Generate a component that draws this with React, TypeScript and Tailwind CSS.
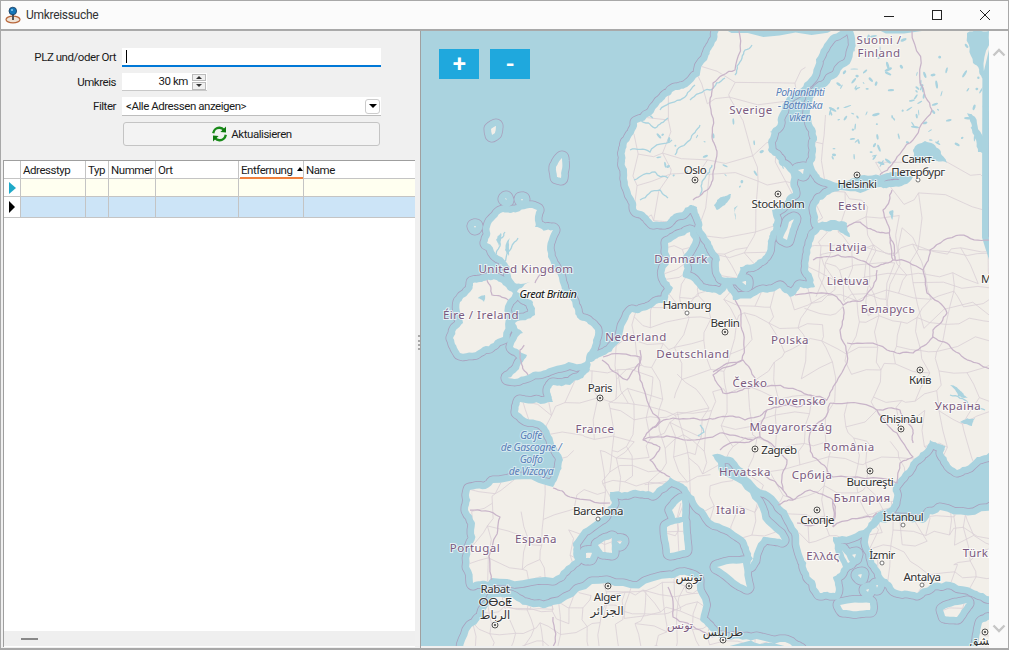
import React from "react";

function rng(seed: number) {
  let s = seed;
  return () => {
    s = (s * 16807) % 2147483647;
    return (s - 1) / 2147483646;
  };
}

function parse(p: string): [number, number][] {
  return p.split(" ").map((q) => {
    const [x, y] = q.split(",").map(Number);
    return [x, y] as [number, number];
  });
}

function rough(p: string, seed: number, closed: boolean, amp = 0.13, levels = 3): string {
  const r = rng(seed * 97 + 13);
  let pts = parse(p);
  if (closed) pts = [...pts, pts[0]];
  for (let l = 0; l < levels; l++) {
    const out: [number, number][] = [pts[0]];
    for (let i = 1; i < pts.length; i++) {
      const [ax, ay] = pts[i - 1];
      const [bx, by] = pts[i];
      const dx = bx - ax;
      const dy = by - ay;
      const k = (r() - 0.5) * amp * 2;
      out.push([(ax + bx) / 2 - dy * k, (ay + by) / 2 + dx * k], [bx, by]);
    }
    pts = out;
  }
  return pts.map(([x, y]) => `${x.toFixed(1)},${y.toFixed(1)}`).join(" ");
}

const LAND_RAW: string[] = [
  "717,25 712,48 707,60 687,87 672,92 660,103 637,123 627,143 625,160 627,172 633,197 637,210 653,222 664,222 672,216 690,205 697,207 700,217 707,237 713,247 720,260 722,277 737,278 740,267 755,263 762,258 768,243 773,230 772,210 782,205 793,193 791,175 780,165 768,150 772,130 780,113 795,92 813,73 823,47 842,30 842,25",
  "850,25 853,53 837,77 817,93 810,117 817,140 813,163 820,177 837,183 857,178 887,173 900,172 913,177 893,187 880,187 840,190 820,200 818,223 835,220 847,223 850,237 837,230 820,230 812,243 808,270 815,287 800,287 790,297 780,288 763,292 737,300 733,300 727,288 720,295 707,292 700,290 683,277 682,260 693,240 690,232 668,243 665,277 673,288 672,290 667,302 647,310 632,312 620,342 600,357 590,362 590,370 583,378 570,385 553,385 550,392 553,402 520,402 518,412 543,423 553,440 563,460 558,477 553,487 493,483 470,490 468,510 475,523 470,550 473,583 488,582 492,578 553,578 575,560 573,543 597,520 612,503 610,492 633,490 653,493 670,477 687,487 700,507 727,527 747,543 753,560 750,565 763,537 782,540 757,503 720,473 712,455 733,458 747,477 777,500 793,523 803,557 807,570 820,593 835,593 833,577 843,567 833,537 867,527 877,513 893,503 893,487 907,470 917,457 930,440 945,446 943,453 957,470 977,457 995,450 995,25",
  "995,507 940,510 923,523 880,522 870,533 873,557 883,577 897,590 917,593 933,583 967,587 983,593 995,597",
  "517,212 537,210 535,227 553,230 548,257 557,273 573,307 580,320 595,330 590,350 585,362 553,367 533,372 508,378 515,373 527,355 513,347 523,333 515,323 535,315 533,302 517,292 530,282 515,283 510,267 507,263 487,243 490,227 503,212",
  "487,280 500,282 513,293 507,302 503,337 483,347 460,353 453,338 463,323 460,302 470,292 473,283",
  "463,650 483,617 495,597 510,597 537,607 553,605 607,583 670,578 680,575 697,580 700,620 713,637 720,638 750,640 790,644 800,650",
  "982,623 995,620 995,650 978,650",
  "717,567 743,563 747,587 735,580",
  "667,527 683,522 685,550 670,553",
  "672,510 682,500 682,517 675,518",
  "840,605 870,603 870,610 843,610",
  "943,610 967,603 957,617 945,616",
  "598,545 612,538 612,553 603,552",
  "586,553 592,553 590,558 586,558",
  "617,541 622,541 620,544",
  "789,222 794,219 787,240 783,238",
  "822,202 835,203 832,211 822,210",
  "742,282 746,281 746,285",
  "556,167 562,158 561,178 557,177",
  "505,199 506,198 507,200",
  "521,199 523,199 522,201",
  "474,226 476,226 475,228",
  "491,129 496,126 495,133 492,135",
  "798,170 804,169 803,174",
  "858,575 862,574 861,578",
  "866,590 869,589 868,592",
  "876,585 878,585 877,588",
  "842,550 850,562 848,563",
  "852,555 856,554 855,558",
];
const LAND = LAND_RAW.map((p, i) => rough(p, i + 1, true, i < 7 ? 0.13 : 0.05));

const LAKES_RAW: string[] = [
  "913,150 925,141 940,150 947,163 930,160 915,162",
  "967,113 975,117 985,140 988,152 978,152 972,130",
  "714,205 722,197 731,194 725,205 717,210",
  "735,220 738,205 734,208",
  "889,212 893,210 892,220",
  "967,33 989,31 989,83 982,78 973,63",
  "505,250 510,238 509,256",
  "496,240 501,233 499,246",
  "478,298 485,295 484,302",
  "950,385 962,392 968,398 958,396",
  "960,422 975,418 972,426",
];
const LAKES = LAKES_RAW.map((p, i) => rough(p, i + 40, true, 0.12));

const FJORDS: string[] = [
  "640,120 655,128 668,118",
  "630,150 650,152 672,140",
  "634,180 655,172 668,178",
  "640,200 660,190 668,198",
  "675,155 690,140 700,125",
  "690,100 710,90 725,78",
  "735,75 742,58 752,45",
  "700,195 705,178 712,165",
  "660,110 680,100 695,85",
  "505,262 510,250 518,238",
  "495,258 500,246 505,232",
  "950,395 968,404 985,410",
  "700,425 704,432 698,436",
];

const BORDERS_RAW: string[] = [
  "739,31 735,70 713,83 710,100 712,137 717,153 713,177 707,190 693,200",
  "912,31 920,83 932,110 913,140 893,163 880,175",
  "892,190 883,210 890,237",
  "813,260 823,257 853,257 873,267 893,260 890,237",
  "847,227 860,222 877,232 890,233",
  "877,270 873,287 863,300 843,305 837,297 795,295",
  "893,260 923,270 927,293 947,313 933,330 933,337",
  "843,307 840,330 847,363 833,387 827,400",
  "847,343 887,350 913,353 933,337 953,350 977,363 995,372",
  "713,372 743,360 763,387 797,390 827,400",
  "767,410 797,407 827,400",
  "735,300 742,330 742,360 713,375 723,393 745,388 763,387",
  "603,357 640,357 643,387 660,420",
  "640,350 640,363 627,380 602,360",
  "650,430 673,418 700,420 720,417 745,420 767,410 760,437",
  "643,440 660,437 687,440 720,433 740,437 753,440",
  "660,447 650,460 670,477",
  "660,420 650,430 643,440 660,447",
  "553,488 570,497 610,503",
  "470,510 500,517 493,543 490,570 492,580",
  "720,450 753,440 760,437 787,460 783,490 793,500 810,490 833,500 833,520 797,523",
  "830,403 877,410 897,433 913,457 900,463 897,483 833,477 813,457 810,433 830,403",
  "877,410 900,410 913,430 913,443",
  "833,527 873,517 877,513",
  "833,500 833,527",
  "765,476 783,490",
  "778,505 793,500",
  "535,283 548,268 557,273",
  "487,280 492,295 508,300",
  "524,345 520,350 522,365 528,375",
  "553,617 553,650",
  "668,587 673,617 700,630 713,637",
  "890,237 895,260",
  "989,240 960,235 930,250 923,270",
];
const BORDERS = BORDERS_RAW.map((p, i) => rough(p, i + 70, false, 0.1));

function net(x0: number, y0: number, x1: number, y1: number, c: number, seed: number) {
  const r = rng(seed);
  const cols = Math.ceil((x1 - x0) / c);
  const rows = Math.ceil((y1 - y0) / c);
  const p: [number, number][][] = [];
  for (let j = 0; j <= rows; j++) {
    const row: [number, number][] = [];
    for (let i = 0; i <= cols; i++) {
      row.push([x0 + i * c + (r() - 0.5) * c * 0.8, y0 + j * c + (r() - 0.5) * c * 0.8]);
    }
    p.push(row);
  }
  const seg = (a: [number, number], b: [number, number]) => {
    const s = (a[0] + b[0]) / 2 + (r() - 0.5) * c * 0.35;
    const t = (a[1] + b[1]) / 2 + (r() - 0.5) * c * 0.35;
    return `M${a[0].toFixed(1)} ${a[1].toFixed(1)}L${s.toFixed(1)} ${t.toFixed(1)}L${b[0].toFixed(1)} ${b[1].toFixed(1)}`;
  };
  let d = "";
  for (let j = 0; j <= rows; j++) {
    for (let i = 0; i <= cols; i++) {
      if (i < cols && r() > 0.2) d += seg(p[j][i], p[j][i + 1]);
      if (j < rows && r() > 0.2) d += seg(p[j][i], p[j + 1][i]);
    }
  }
  return d;
}

const NET = [
  net(610, 250, 995, 520, 24, 11),
  net(470, 380, 700, 590, 26, 29),
  net(630, 70, 790, 290, 38, 47),
  net(470, 590, 770, 650, 19, 83),
  net(870, 505, 995, 610, 25, 101),
  net(890, 170, 995, 300, 36, 131),
  net(800, 200, 890, 300, 23, 151),
].join("");

function scatter(x0: number, y0: number, x1: number, y1: number, n: number, seed: number) {
  const r = rng(seed);
  const out: { x: number; y: number; a: number; b: number; t: number }[] = [];
  for (let i = 0; i < n; i++) {
    out.push({
      x: x0 + r() * (x1 - x0),
      y: y0 + r() * (y1 - y0),
      a: 1 + r() * 3.2,
      b: 0.5 + r() * 0.9,
      t: r() * 180 - 90,
    });
  }
  return out;
}
const PONDS = [
  ...scatter(830, 70, 925, 165, 70, 201),
  ...scatter(925, 40, 989, 150, 28, 211),
  ...scatter(650, 110, 790, 190, 26, 221),
  ...scatter(850, 35, 915, 70, 12, 231),
];

const COUNTRY: [string, number, number][] = [
  ["Suomi /", 879, 44], ["Finland", 879, 57], ["Sverige", 751, 114], ["Eesti", 852, 210], ["Latvija", 848, 251],
  ["Lietuva", 848, 285], ["Беларусь", 888, 313], ["Danmark", 681, 263], ["Deutschland", 693, 358], ["Polska", 790, 344],
  ["Nederland", 636, 341], ["Česko", 750, 387], ["United Kingdom", 526, 273], ["Éire / Ireland", 481, 319], ["France", 595, 433],
  ["España", 536, 543], ["Portugal", 475, 552], ["Italia", 731, 514], ["Hrvatska", 745, 476], ["Србија", 812, 479],
  ["България", 862, 502], ["România", 849, 451], ["Magyarország", 791, 431], ["Slovensko", 797, 405], ["Україна", 958, 410],
  ["Ελλάς", 823, 560], ["Türkiye", 984, 557],
];

const CITY: [string, number, number][] = [
  ["Санкт-", 918, 163], ["Петербург", 918, 176], ["Helsinki", 857, 188], ["Stockholm", 778, 208], ["Oslo", 695, 174],
  ["Berlin", 725, 327], ["Hamburg", 687, 309], ["Paris", 600, 392], ["Barcelona", 598, 515], ["Rabat", 495, 593],
  ["ⵔⴱⴰⵟ", 495, 606], ["الرباط", 495, 619], ["Alger", 607, 601], ["الجزائر", 607, 615], ["تونس", 689, 581],
  ["طرابلس", 723, 636], ["Bucureşti", 870, 486], ["Zagreb", 779, 454], ["Chișinău", 901, 423], ["Київ", 920, 384],
  ["Скопје", 817, 524], ["İstanbul", 903, 521], ["İzmir", 882, 559], ["Antalya", 922, 581], ["M", 986, 283], ["دمشق", 985, 645],
];

const SEA: [string, number, number][] = [
  ["Pohjanlahti", 800, 96], ["- Bottniska", 800, 109], ["viken", 800, 121],
  ["Golfe", 531, 439], ["de Gascogne /", 531, 451], ["Golfo", 531, 463], ["de Vizcaya", 531, 475],
];

const DOTS: [number, number][] = [
  [857, 175], [778, 194], [695, 180], [725, 332], [600, 398], [495, 625], [608, 586], [689, 586], [723, 640],
  [870, 471], [755, 449], [901, 429], [920, 370], [817, 510], [985, 632],
];
const SMALL: [number, number][] = [[687, 313], [598, 519], [903, 525], [882, 563], [922, 585], [918, 180]];

function MapArt() {
  const font = "[font-family:'Noto_Sans','DejaVu_Sans',sans-serif]";
  return (
    <svg viewBox="421 31 568 615" className="block w-full h-full">
      <defs>
        <clipPath id="land">
          {LAND.map((p, i) => (
            <polygon key={i} points={p} />
          ))}
        </clipPath>
      </defs>
      <rect x="421" y="31" width="568" height="615" fill="#aad3df" />
      <g fill="#aad3df" stroke="#a9a0bd" strokeWidth="15" strokeLinejoin="round">
        {LAND.map((p, i) => (
          <polygon key={i} points={p} />
        ))}
      </g>
      <g fill="#aad3df" stroke="#aad3df" strokeWidth="13.4" strokeLinejoin="round">
        {LAND.map((p, i) => (
          <polygon key={i} points={p} />
        ))}
      </g>
      <g fill="#f2efe9">
        {LAND.map((p, i) => (
          <polygon key={i} points={p} />
        ))}
      </g>
      <g clipPath="url(#land)">
        <path d={NET} fill="none" stroke="#d9cfd6" strokeWidth="0.8" />
        <g fill="none" stroke="#aad3df" strokeWidth="1.3">
          {FJORDS.map((p, i) => (
            <polyline key={i} points={rough(p, i + 300, false, 0.15)} />
          ))}
        </g>
        <g fill="#aad3df">
          {PONDS.map((e, i) => (
            <ellipse key={i} cx={e.x} cy={e.y} rx={e.a} ry={e.b} transform={`rotate(${e.t} ${e.x} ${e.y})`} />
          ))}
        </g>
      </g>
      <g fill="#aad3df">
        {LAKES.map((p, i) => (
          <polygon key={i} points={p} />
        ))}
      </g>
      <g fill="none" stroke="#c8b4c9" strokeWidth="1.25" strokeLinejoin="round">
        {BORDERS.map((p, i) => (
          <polyline key={i} points={p} />
        ))}
      </g>
      {DOTS.map(([x, y], i) => (
        <g key={i}>
          <circle cx={x} cy={y} r="3" fill="#f2efe9" stroke="#444" strokeWidth="0.9" />
          <circle cx={x} cy={y} r="1.1" fill="#444" />
        </g>
      ))}
      {SMALL.map(([x, y], i) => (
        <circle key={i} cx={x} cy={y} r="2" fill="#fff" stroke="#555" strokeWidth="0.8" />
      ))}
      <g textAnchor="middle" className={`${font} text-[11.5px] tracking-[0.5px] fill-[#7a5a80] stroke-white/70 stroke-2 [paint-order:stroke]`}>
        {COUNTRY.map(([t, x, y]) => (
          <text key={t} x={x} y={y}>{t}</text>
        ))}
      </g>
      <g textAnchor="middle" className={`${font} text-[11.5px] fill-[#333333] stroke-white/70 stroke-2 [paint-order:stroke]`}>
        {CITY.map(([t, x, y]) => (
          <text key={t} x={x} y={y}>{t}</text>
        ))}
      </g>
      <g textAnchor="middle" className={`${font} text-[10.5px] italic fill-[#5b82b9] stroke-white/50 stroke-2 [paint-order:stroke]`}>
        {SEA.map(([t, x, y]) => (
          <text key={t} x={x} y={y}>{t}</text>
        ))}
      </g>
      <text x="548" y="298" textAnchor="middle" className={`${font} text-[11px] italic fill-[#111111] stroke-white/70 stroke-2 [paint-order:stroke]`}>
        Great Britain
      </text>
      <text x="680" y="629" textAnchor="middle" className={`${font} text-[11px] fill-[#7a5a80] stroke-white/70 stroke-2 [paint-order:stroke]`}>
        تونس
      </text>
    </svg>
  );
}

function PinIcon() {
  return (
    <svg width="18" height="18" viewBox="0 0 18 18">
      <ellipse cx="9" cy="13.5" rx="7" ry="3.4" fill="#efe3d6" stroke="#b8663a" strokeWidth="1.2" />
      <path d="M9 14 L9 8" stroke="#555" strokeWidth="2" />
      <circle cx="8.8" cy="5" r="3.8" fill="#1576b8" stroke="#16375a" strokeWidth="0.8" />
      <circle cx="8" cy="4" r="1" fill="#8fd0f5" />
    </svg>
  );
}

function RefreshIcon() {
  return (
    <svg width="17" height="18" viewBox="0 0 17 18" fill="none">
      <path d="M2.2 8.2 C2.8 4.6 5.6 2.6 8.6 2.8 C10.4 2.9 11.8 3.6 12.8 4.8" stroke="#1a8a1a" strokeWidth="2.4" />
      <path d="M15 1.6 L15 7.6 L9.4 7 Z" fill="#0f7a0f" />
      <path d="M14.8 9.8 C14.2 13.4 11.4 15.4 8.4 15.2 C6.6 15.1 5.2 14.4 4.2 13.2" stroke="#1a8a1a" strokeWidth="2.4" />
      <path d="M2 16.4 L2 10.4 L7.6 11 Z" fill="#0f7a0f" />
    </svg>
  );
}

const COLS = "grid grid-cols-[17px_65px_23px_47px_83px_65px_1fr]";

function Row({ cls, marker }: { cls: string; marker: React.ReactNode }) {
  return (
    <div className={`${COLS} ${cls} border-b border-[#c4c4c4]`}>
      <div className="flex items-center justify-center bg-white border-r border-[#c4c4c4]">{marker}</div>
      {[0, 1, 2, 3, 4].map((i) => (
        <div key={i} className="border-r border-[#c4c4c4]" />
      ))}
      <div />
    </div>
  );
}

export default function App() {
  const ui = "font-['Roboto','Liberation_Sans',sans-serif] text-[11.5px] text-[#1a1a1a] tracking-[-0.45px]";
  const head = "pl-[2px] border-r border-[#c4c4c4] leading-[18px] whitespace-nowrap overflow-hidden";
  return (
    <div className={`${ui} relative w-[1009px] h-[650px] flex flex-col bg-[#f0f0f0] border border-[#a8a8a8] border-b-2 overflow-hidden`}>
      <div className="h-[30px] shrink-0 bg-[#fbfbfb] border-b-2 border-[#a9a9a9] flex items-center pl-[3px]">
        <PinIcon />
        <span className="ml-[4px] text-[12px] text-[#333] tracking-[-0.3px]">Umkreissuche</span>
        <div className="ml-auto flex items-center">
          <svg width="46" height="28" viewBox="0 0 46 28"><path d="M14 15.5H24" stroke="#222" strokeWidth="1" /></svg>
          <svg width="46" height="28" viewBox="0 0 46 28"><rect x="16.5" y="9.5" width="9" height="9" fill="none" stroke="#222" strokeWidth="1" /></svg>
          <svg width="46" height="28" viewBox="0 0 46 28"><path d="M18 9L28 19M28 9L18 19" stroke="#222" strokeWidth="1" /></svg>
        </div>
      </div>
      <div className="flex-1 min-h-0 flex">
        <div className="w-[419px] shrink-0 flex flex-col pt-[17px] pl-[2px] pb-[1px]">
          <div className="flex flex-col gap-[6px] pr-[39px]">
            <div className="flex items-center h-[19px]">
              <label className="w-[113px] text-right pt-px">PLZ und/oder Ort</label>
              <div className="ml-[6px] flex-1 h-[19px] bg-white border-b-2 border-[#0078d7] flex items-center pl-[4px]">
                <span className="w-px h-[13px] bg-black" />
              </div>
            </div>
            <div className="flex items-center h-[18px]">
              <label className="w-[113px] text-right pt-px">Umkreis</label>
              <div className="ml-[6px] w-[85px] h-[18px] bg-white border-b border-[#c8c8c8] flex items-center justify-end">
                <span className="mr-[4px] pt-px">30 km</span>
                <div className="w-[14px] h-[16px] flex flex-col gap-px mr-px">
                  <div className="flex-1 border border-[#bbb] bg-[#f0f0f0] flex items-center justify-center">
                    <span className="w-0 h-0 border-x-[3px] border-x-transparent border-b-[3px] border-b-[#333]" />
                  </div>
                  <div className="flex-1 border border-[#bbb] bg-[#f0f0f0] flex items-center justify-center">
                    <span className="w-0 h-0 border-x-[3px] border-x-transparent border-t-[3px] border-t-[#333]" />
                  </div>
                </div>
              </div>
            </div>
            <div className="flex items-center h-[19px]">
              <label className="w-[113px] text-right pt-px">Filter</label>
              <div className="ml-[6px] flex-1 h-[19px] bg-white border-b border-[#bdbdbd] flex items-center pl-[4px] pr-[1px]">
                <span className="pt-px">&lt;Alle Adressen anzeigen&gt;</span>
                <div className="ml-auto w-[15px] h-[15px] border border-[#ccc] rounded-[3px] bg-white flex items-center justify-center">
                  <span className="w-0 h-0 border-x-[4px] border-x-transparent border-t-[4px] border-t-black" />
                </div>
              </div>
            </div>
            <div className="ml-[120px] mr-px h-[24px] border border-[#c4c4c4] rounded-[3px] bg-[#f3f3f3] flex items-center justify-center gap-[3px]">
              <RefreshIcon />
              <span className="pt-px">Aktualisieren</span>
            </div>
          </div>
          <div className="mt-[14px] flex-1 min-h-0 mr-[5px] border-l border-t border-[#9f9f9f] bg-white flex flex-col">
            <div className={`${COLS} h-[18px] shrink-0 border-b border-[#c4c4c4] bg-white`}>
              <div className="border-r border-[#c4c4c4]" />
              <div className={head}>Adresstyp</div>
              <div className={head}>Typ</div>
              <div className={head}>Nummer</div>
              <div className={head}>Ort</div>
              <div className={`${head} relative`}>
                Entfernung
                <span className="absolute right-[0px] top-[6px] w-0 h-0 border-x-[3px] border-x-transparent border-b-[4px] border-b-black" />
                <span className="absolute left-[1px] right-0 bottom-0 h-[2px] bg-[#f07f3c]" />
              </div>
              <div className="pl-[2px] leading-[18px]">Name</div>
            </div>
            <Row
              cls="h-[18px] shrink-0 bg-[#fffff0]"
              marker={<span className="w-0 h-0 border-y-[6px] border-y-transparent border-l-[7px] border-l-[#1fa9c9]" />}
            />
            <Row
              cls="h-[21px] shrink-0 bg-[#cce4f7]"
              marker={<span className="w-0 h-0 border-y-[6px] border-y-transparent border-l-[6px] border-l-black" />}
            />
            <div className="flex-1 min-h-0" />
            <div className="h-[16px] shrink-0 bg-[#efefef] border-b border-white flex items-center pl-[17px]">
              <span className="w-[17px] h-[2px] bg-[#888]" />
            </div>
          </div>
        </div>
        <div className="w-px shrink-0 bg-[#a0a0a0]" />
        <div className="relative w-[568px] shrink-0 h-[615px]">
          <MapArt />
          <div className="absolute left-[18px] top-[18px] flex gap-[11px]">
            <div className="w-[40px] h-[30px] bg-[#1fa8dd] text-white text-[24px] font-semibold flex items-center justify-center leading-none">+</div>
            <div className="w-[40px] h-[30px] bg-[#1fa8dd] text-white text-[24px] font-semibold flex items-center justify-center leading-none">-</div>
          </div>
        </div>
        <div className="flex-1 bg-[#fafafa] flex flex-col items-center justify-between pt-[17px] pb-[15px]">
          <svg width="14" height="9" viewBox="0 0 14 9"><path d="M1.5 7.5L7 2L12.5 7.5" fill="none" stroke="#c6c6c6" strokeWidth="2.4" /></svg>
          <svg width="14" height="9" viewBox="0 0 14 9"><path d="M1.5 1.5L7 7L12.5 1.5" fill="none" stroke="#c6c6c6" strokeWidth="2.4" /></svg>
        </div>
      </div>
      <div className="absolute left-[417px] top-[334px] w-[2px] h-[15px] border-l-2 border-dotted border-[#a8a8a8]" />
    </div>
  );
}
